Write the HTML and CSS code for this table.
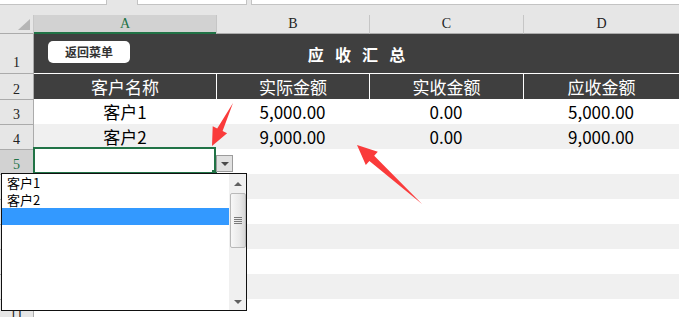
FILE: index.html
```html
<!DOCTYPE html>
<html lang="zh">
<head>
<meta charset="utf-8">
<title>应收汇总</title>
<link rel="stylesheet" href="styles.css">
</head>
<body>
<div class="app">
  <div class="topbar">
    <div class="tbox b1"></div>
    <div class="tbox b2"></div>
    <div class="tbox b3"></div>
  </div>
  <div class="sheet">
    <div class="corner"></div>
    <div class="colh sel">A</div>
    <div class="colh sep">B</div>
    <div class="colh sep">C</div>
    <div class="colh sep">D</div>

    <div class="rowh first">1</div>
    <div class="c dk title">
      <div class="backbtn">返回菜单</div>
      <span>应 收 汇 总</span>
    </div>

    <div class="rowh">2</div>
    <div class="c dk hd">客户名称</div>
    <div class="c dk hd vl">实际金额</div>
    <div class="c dk hd vl">实收金额</div>
    <div class="c dk hd vl">应收金额</div>

    <div class="rowh">3</div>
    <div class="c">客户1</div>
    <div class="c">5,000.00</div>
    <div class="c">0.00</div>
    <div class="c">5,000.00</div>

    <div class="rowh">4</div>
    <div class="c alt">客户2</div>
    <div class="c alt">9,000.00</div>
    <div class="c alt">0.00</div>
    <div class="c alt">9,000.00</div>

    <div class="rowh rsel">5</div>
    <div class="c"></div><div class="c"></div><div class="c"></div><div class="c"></div>

    <div class="rowh">6</div>
    <div class="c alt"></div><div class="c alt"></div><div class="c alt"></div><div class="c alt"></div>

    <div class="rowh">7</div>
    <div class="c"></div><div class="c"></div><div class="c"></div><div class="c"></div>

    <div class="rowh">8</div>
    <div class="c alt"></div><div class="c alt"></div><div class="c alt"></div><div class="c alt"></div>

    <div class="rowh">9</div>
    <div class="c"></div><div class="c"></div><div class="c"></div><div class="c"></div>

    <div class="rowh">10</div>
    <div class="c alt"></div><div class="c alt"></div><div class="c alt"></div><div class="c alt"></div>

    <div class="rowh">11</div>
    <div class="c"></div><div class="c"></div><div class="c"></div><div class="c"></div>
  </div>

  <div class="selbox"></div>
  <div class="fillhandle"></div>
  <div class="ddbtn"><span class="tri-down"></span></div>

  <div class="ddlist">
    <div class="items">
      <div class="item">客户1</div>
      <div class="item">客户2</div>
      <div class="item hl"></div>
    </div>
    <div class="vscroll">
      <div class="sb-up"><span class="tri-up"></span></div>
      <div class="thumb"><span class="grip"></span></div>
      <div class="sb-fill"></div>
      <div class="sb-down"><span class="tri-down small"></span></div>
    </div>
  </div>

  <svg class="arrows" width="679" height="317" viewBox="0 0 679 317">
    <polygon points="233,103 222.6,131.1 227.1,133.3 212,146 212.7,126.3 217.2,128.5"/>
    <polygon points="422,204 374.2,155.8 377.8,151.7 357,145 365.8,165.1 369.4,161.0"/>
  </svg>
</div>
</body>
</html>
```
FILE: styles.css
```css
* { box-sizing: border-box; margin: 0; padding: 0; }
body {
  margin: 0;
  background: #fff;
  font-family: "Noto Sans CJK SC", "Noto Sans", sans-serif;
  overflow: hidden;
}
.app {
  position: relative;
  width: 679px;
  height: 317px;
  overflow: hidden;
  background: #fff;
}
.topbar {
  height: 15px;
  background: #e6e6e6;
  display: flex;
  align-items: flex-start;
}
.tbox {
  height: 5px;
  background: #fff;
  border: 1px solid #c3c3c3;
  border-top: none;
}
.b1 { width: 108px; margin-left: -1px; }
.b2 { width: 110px; margin-left: 30px; }
.b3 { flex: 1; margin-left: 4px; margin-right: -2px; }

.sheet {
  display: grid;
  grid-template-columns: 34px 182px 153px 154px 156px;
  grid-template-rows: 19px 39px 26px repeat(9, 25px);
}
.corner {
  position: relative;
  background: #e6e6e6;
  border-bottom: 1px solid #ababab;
  border-right: 1px solid #c8c8c8;
}
.corner::after {
  content: "";
  position: absolute;
  right: 3px;
  bottom: 3px;
  width: 12px;
  height: 11px;
  background: #b5b5b5;
  clip-path: polygon(100% 0, 100% 100%, 0 100%);
}
.colh {
  background: #e6e6e6;
  border-bottom: 1px solid #ababab;
  display: flex;
  align-items: flex-end;
  justify-content: center;
  padding-bottom: 2px;
  font-family: "Liberation Serif", serif;
  font-size: 14px;
  line-height: 14px;
  color: #222;
}
.colh.sep { border-left: 1px solid #c6c6c6; }
.colh.sel {
  background: #d2d2d2;
  border-bottom: 2px solid #217346;
  color: #217346;
  padding-bottom: 1px;
}
.rowh {
  background: #e6e6e6;
  border-top: 1px solid #ababab;
  border-right: 1px solid #ababab;
  display: flex;
  align-items: flex-end;
  justify-content: center;
  padding-bottom: 2px;
  font-family: "Liberation Serif", serif;
  font-size: 14px;
  line-height: 14px;
  color: #222;
}
.rowh.first { border-top: none; padding-bottom: 3px; }
.rowh.rsel { background: #d2d2d2; color: #217346; }

.c {
  display: flex;
  align-items: center;
  justify-content: center;
  font-size: 17px;
  line-height: 20px;
  color: #000;
  background: #fff;
  white-space: nowrap;
}
.c.alt { background: #f0f0f0; }
.c.dk { background: #3f3f3f; color: #fff; }
.c.hd { border-top: 1px solid #fff; }
.c.vl { border-left: 1px solid #fff; }
.title {
  grid-column: span 4;
  position: relative;
  font-size: 16px;
  font-weight: bold;
  word-spacing: 7.5px;
  padding-top: 1px;
}
.backbtn {
  position: absolute;
  left: 14px;
  top: 7px;
  width: 82px;
  height: 22px;
  background: #fff;
  border-radius: 5px;
  display: flex;
  align-items: center;
  justify-content: center;
  font-size: 12px;
  font-weight: bold;
  color: #333;
  word-spacing: 0;
}

.selbox {
  position: absolute;
  left: 33px;
  top: 147px;
  width: 183px;
  height: 27px;
  border: 2px solid #217346;
}
.fillhandle {
  position: absolute;
  left: 212px;
  top: 170px;
  width: 5px;
  height: 5px;
  background: #217346;
}
.ddbtn {
  position: absolute;
  left: 216px;
  top: 155px;
  width: 17px;
  height: 17px;
  background: #e1e1e1;
  border: 1px solid #9c9c9c;
  display: flex;
  align-items: center;
  justify-content: center;
}
.tri-down {
  display: block;
  width: 0;
  height: 0;
  border-left: 4px solid transparent;
  border-right: 4px solid transparent;
  border-top: 4px solid #4a4a4a;
  margin-top: 1px;
}
.tri-down.small { border-top-color: #606060; }
.tri-up {
  display: block;
  width: 0;
  height: 0;
  border-left: 4px solid transparent;
  border-right: 4px solid transparent;
  border-bottom: 4px solid #606060;
}

.ddlist {
  position: absolute;
  left: 1px;
  top: 173px;
  width: 246px;
  height: 138px;
  border: 1px solid #111;
  background: #fff;
  display: flex;
}
.items {
  flex: 1;
  display: flex;
  flex-direction: column;
}
.item {
  height: 17px;
  line-height: 17px;
  padding-left: 5px;
  font-size: 13px;
  color: #000;
}
.item.hl { background: #3399ff; }
.vscroll {
  width: 17px;
  background: #f0f0f0;
  display: flex;
  flex-direction: column;
}
.sb-up {
  height: 19px;
  display: flex;
  align-items: center;
  justify-content: center;
  padding-top: 1px;
}
.thumb {
  height: 55px;
  margin: 0 0 0 1px;
  border: 1px solid #b9b9b9;
  border-radius: 2px;
  background: linear-gradient(to right, #f7f7f7, #e9e9e9 60%, #d6d6d6);
  display: flex;
  align-items: center;
  justify-content: center;
}
.grip {
  display: block;
  width: 8px;
  height: 7px;
  background: repeating-linear-gradient(to bottom, #7a7a7a 0 1px, transparent 1px 2px);
}
.sb-fill { flex: 1; }
.sb-down {
  height: 17px;
  display: flex;
  align-items: center;
  justify-content: center;
}

.arrows {
  position: absolute;
  left: 0;
  top: 0;
  pointer-events: none;
}
.arrows polygon { fill: #fa3b3b; }
```
